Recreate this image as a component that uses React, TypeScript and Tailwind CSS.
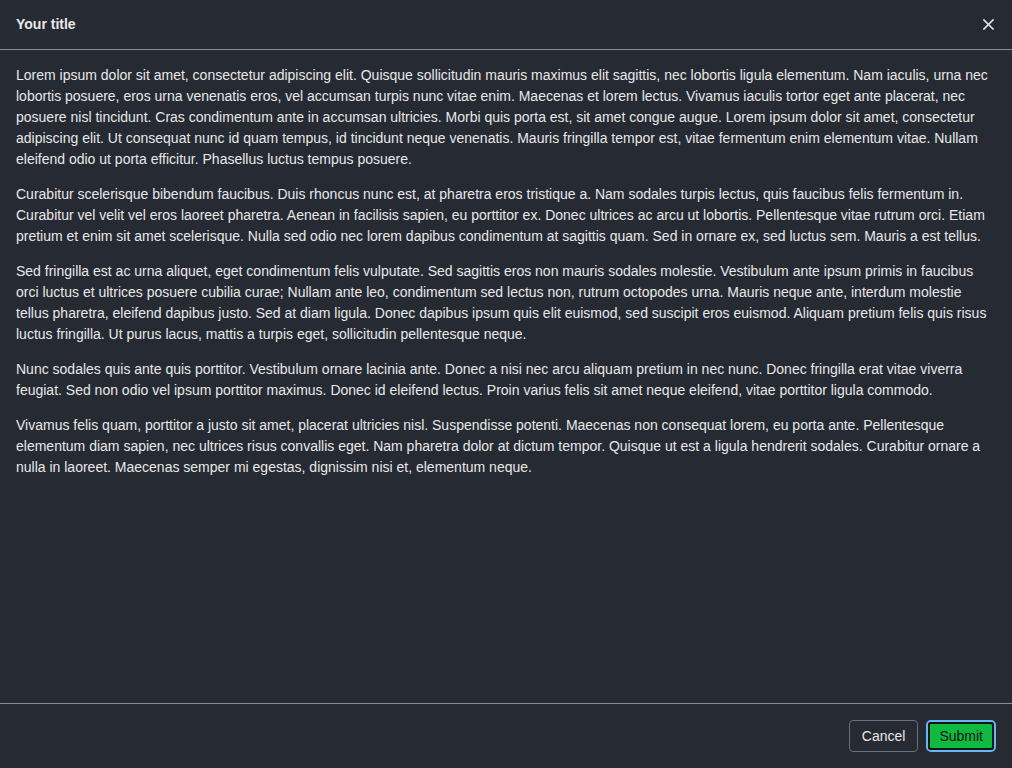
import React from "react";

const paras = [
  "Lorem ipsum dolor sit amet, consectetur adipiscing elit. Quisque sollicitudin mauris maximus elit sagittis, nec lobortis ligula elementum. Nam iaculis, urna nec lobortis posuere, eros urna venenatis eros, vel accumsan turpis nunc vitae enim. Maecenas et lorem lectus. Vivamus iaculis tortor eget ante placerat, nec posuere nisl tincidunt. Cras condimentum ante in accumsan ultricies. Morbi quis porta est, sit amet congue augue. Lorem ipsum dolor sit amet, consectetur adipiscing elit. Ut consequat nunc id quam tempus, id tincidunt neque venenatis. Mauris fringilla tempor est, vitae fermentum enim elementum vitae. Nullam eleifend odio ut porta efficitur. Phasellus luctus tempus posuere.",
  "Curabitur scelerisque bibendum faucibus. Duis rhoncus nunc est, at pharetra eros tristique a. Nam sodales turpis lectus, quis faucibus felis fermentum in. Curabitur vel velit vel eros laoreet pharetra. Aenean in facilisis sapien, eu porttitor ex. Donec ultrices ac arcu ut lobortis. Pellentesque vitae rutrum orci. Etiam pretium et enim sit amet scelerisque. Nulla sed odio nec lorem dapibus condimentum at sagittis quam. Sed in ornare ex, sed luctus sem. Mauris a est tellus.",
  "Sed fringilla est ac urna aliquet, eget condimentum felis vulputate. Sed sagittis eros non mauris sodales molestie. Vestibulum ante ipsum primis in faucibus orci luctus et ultrices posuere cubilia curae; Nullam ante leo, condimentum sed lectus non, rutrum octopodes urna. Mauris neque ante, interdum molestie tellus pharetra, eleifend dapibus justo. Sed at diam ligula. Donec dapibus ipsum quis elit euismod, sed suscipit eros euismod. Aliquam pretium felis quis risus luctus fringilla. Ut purus lacus, mattis a turpis eget, sollicitudin pellentesque neque.",
  "Nunc sodales quis ante quis porttitor. Vestibulum ornare lacinia ante. Donec a nisi nec arcu aliquam pretium in nec nunc. Donec fringilla erat vitae viverra feugiat. Sed non odio vel ipsum porttitor maximus. Donec id eleifend lectus. Proin varius felis sit amet neque eleifend, vitae porttitor ligula commodo.",
  "Vivamus felis quam, porttitor a justo sit amet, placerat ultricies nisl. Suspendisse potenti. Maecenas non consequat lorem, eu porta ante. Pellentesque elementum diam sapien, nec ultrices risus convallis eget. Nam pharetra dolor at dictum tempor. Quisque ut est a ligula hendrerit sodales. Curabitur ornare a nulla in laoreet. Maecenas semper mi egestas, dignissim nisi et, elementum neque.",
];

export default function App() {
  return (
    <div
      className="h-[768px] w-[1012px] flex flex-col bg-[#262a33] text-[#e8e8e8] text-[14px] leading-[21px]"
      style={{ fontFamily: '"Liberation Sans", Arial, sans-serif' }}
    >
      <div className="h-[50px] flex items-center justify-between px-4 border-b border-[#8a8d93]">
        <div className="font-bold text-[14px]">Your title</div>
        <button className="text-[#e8e8e8] w-5 h-5 flex items-center justify-center -mr-[2px]">
          <svg width="11" height="11" viewBox="0 0 11 11" stroke="currentColor" strokeWidth="1.6" strokeLinecap="square">
            <path d="M1 1L10 10M10 1L1 10" />
          </svg>
        </button>
      </div>
      <div className="flex-1 px-4 pt-[15px] flex flex-col gap-[14px]">
        {paras.map((p, i) => (
          <p key={i}>{p}</p>
        ))}
      </div>
      <div className="border-t border-[#8a8d93] h-[65px] flex items-center justify-end gap-2 px-4">
        <button className="h-8 px-3 rounded-[4px] border border-[#6b6f76] text-[#e8e8e8]">Cancel</button>
        <span className="h-8 rounded-[5px] border-2 border-[#6cb4f5] flex">
          <button className="h-[28px] px-[9px] flex items-center rounded-[3px] border-2 border-[#0f1a14] bg-[#0fba3f] text-[#0d1410]">Submit</button>
        </span>
      </div>
    </div>
  );
}
